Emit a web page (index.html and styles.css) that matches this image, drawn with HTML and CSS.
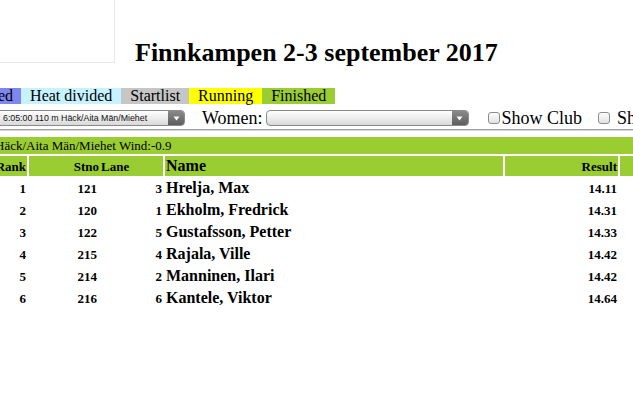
FILE: index.html
```html
<!DOCTYPE html>
<html>
<head>
<meta charset="utf-8">
<link rel="stylesheet" href="styles.css">
</head>
<body>
<div class="page">
  <div class="header">
    <div class="logo"></div>
    <h1 class="title">Finnkampen 2-3 september 2017</h1>
  </div>
  <div class="legend">
    <span class="lg lg-first">ed</span>
    <span class="lg lg-heat">Heat divided</span>
    <span class="lg lg-start">Startlist</span>
    <span class="lg lg-run">Running</span>
    <span class="lg lg-fin">Finished</span>
  </div>
  <div class="form">
    <div class="sel sel-men"><span class="sel-text">6:05:00 110 m Häck/Aita Män/Miehet</span><span class="sel-btn"><svg width="7" height="5" viewBox="0 0 7 5"><path d="M0.5 0.5 H6.5 L3.5 4.5 Z" fill="#fff"/></svg></span></div>
    <span class="lbl lbl-women">Women:</span>
    <div class="sel sel-women"><span class="sel-text"></span><span class="sel-btn"><svg width="7" height="5" viewBox="0 0 7 5"><path d="M0.5 0.5 H6.5 L3.5 4.5 Z" fill="#fff"/></svg></span></div>
    <span class="cb cb-club"></span><span class="lbl">Show Club</span>
    <span class="cb cb-second"></span><span class="lbl">Sh</span>
  </div>
  <div class="rule"></div>
  <div class="results">
    <div class="wind">Häck/Aita Män/Miehet Wind:-0.9</div>
    <div class="row head">
      <div class="c r">Rank</div>
      <div class="c r">Stno</div>
      <div class="c">Lane</div>
      <div class="c name">Name</div>
      <div class="c r">Result</div>
      <div class="c"></div>
    </div>
    <div class="row">
      <div class="c r">1</div><div class="c r">121</div><div class="c r">3</div><div class="c name">Hrelja, Max</div><div class="c r">14.11</div><div class="c"></div>
    </div>
    <div class="row">
      <div class="c r">2</div><div class="c r">120</div><div class="c r">1</div><div class="c name">Ekholm, Fredrick</div><div class="c r">14.31</div><div class="c"></div>
    </div>
    <div class="row">
      <div class="c r">3</div><div class="c r">122</div><div class="c r">5</div><div class="c name">Gustafsson, Petter</div><div class="c r">14.33</div><div class="c"></div>
    </div>
    <div class="row">
      <div class="c r">4</div><div class="c r">215</div><div class="c r">4</div><div class="c name">Rajala, Ville</div><div class="c r">14.42</div><div class="c"></div>
    </div>
    <div class="row">
      <div class="c r">5</div><div class="c r">214</div><div class="c r">2</div><div class="c name">Manninen, Ilari</div><div class="c r">14.42</div><div class="c"></div>
    </div>
    <div class="row">
      <div class="c r">6</div><div class="c r">216</div><div class="c r">6</div><div class="c name">Kantele, Viktor</div><div class="c r">14.64</div><div class="c"></div>
    </div>
  </div>
</div>
</body>
</html>
```
FILE: styles.css
```css
html, body {
  margin: 0;
  padding: 0;
  background: #fff;
}
body {
  font-family: "Liberation Serif", "Times New Roman", serif;
  color: #000;
  overflow: hidden;
  width: 633px;
  height: 416px;
}
.page {
  width: 700px;
}
.header {
  display: flex;
  align-items: flex-start;
  height: 63px;
}
.logo {
  width: 114px;
  height: 62px;
  border-right: 1px solid #e8e8e8;
  border-bottom: 1px solid #e8e8e8;
  box-sizing: content-box;
}
.title {
  margin: 38px 0 0 20px;
  font-size: 26px;
  font-weight: bold;
  line-height: 30px;
  white-space: nowrap;
}
.legend {
  display: flex;
  margin-top: 25px;
  font-size: 16px;
  line-height: 16px;
  white-space: nowrap;
}
.lg {
  padding: 0 9px;
}
.lg-first {
  background: #7f86f0;
  margin-left: -2px;
  padding-left: 0;
  padding-right: 8px;
}
.lg-heat { background: #c6f3ff; }
.lg-start { background: #c6c6c6; }
.lg-run { background: #ffff00; }
.lg-fin { background: #9acd32; }
.form {
  display: flex;
  align-items: center;
  height: 20px;
  margin-top: 4px;
  white-space: nowrap;
}
.sel {
  display: flex;
  align-items: center;
  height: 16px;
  box-sizing: border-box;
  border: 1px solid #8a8a8a;
  border-radius: 4px;
  background: linear-gradient(#ffffff, #e9e9e9 60%, #d8d8d8);
  overflow: hidden;
}
.sel-men {
  width: 190px;
  margin-left: -5px;
}
.sel-women {
  width: 203px;
  margin-left: 3px;
}
.sel-text {
  flex: 1;
  font-family: "Liberation Sans", Arial, sans-serif;
  font-size: 8.8px;
  padding-left: 7px;
  color: #111;
  overflow: hidden;
}
.sel-btn {
  width: 16px;
  height: 100%;
  display: flex;
  align-items: center;
  justify-content: center;
  background: linear-gradient(#8a8a8a, #5e5e5e);
}
.lbl {
  font-size: 18px;
  line-height: 20px;
}
.lbl-women {
  margin-left: 17px;
}
.cb {
  width: 12px;
  height: 12px;
  box-sizing: border-box;
  border: 1px solid #8c8c8c;
  border-radius: 3px;
  background: linear-gradient(#fdfdfd, #e2e2e2);
  margin-right: 2px;
}
.cb-club { margin-left: 19px; }
.cb-second { margin-left: 16px; margin-right: 7px; }
.rule {
  margin-top: 1px;
  height: 0;
  border-top: 1px solid #a0a0a0;
  border-bottom: 1px solid #d6d6d6;
}
.results {
  margin-top: 6px;
  margin-left: -10px;
  display: flex;
  flex-direction: column;
  gap: 2px;
}
.wind {
  background: #9acd32;
  height: 17px;
  font-size: 13px;
  line-height: 17px;
  padding-left: 5px;
  white-space: nowrap;
}
.row {
  display: grid;
  grid-template-columns: 37px 69px 63px 338px 113px 60px;
  column-gap: 2px;
  height: 20px;
  align-items: stretch;
  font-size: 13px;
  font-weight: bold;
}
.c {
  padding: 0 1px;
  height: 20px;
  line-height: 21px;
  white-space: nowrap;
  overflow: hidden;
}
.r { text-align: right; }
.name {
  font-size: 16px;
  line-height: 19px;
  padding-left: 1px;
}
.head .c {
  background: #9acd32;
}
.head .c:nth-child(2) {
  margin-right: -2px;
}
```
